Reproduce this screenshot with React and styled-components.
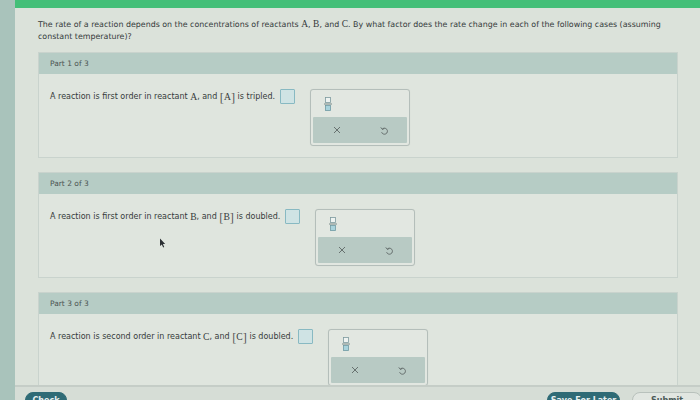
import styled, { createGlobalStyle } from 'styled-components';

const GlobalStyle = createGlobalStyle`
  html, body {
    margin: 0;
    padding: 0;
    background: #dbe2da;
  }
  * {
    box-sizing: border-box;
  }
`;

const parts = [
  { label: 'Part 1 of 3', order: 'first', reactant: 'A', change: 'tripled' },
  { label: 'Part 2 of 3', order: 'first', reactant: 'B', change: 'doubled', cursor: true },
  { label: 'Part 3 of 3', order: 'second', reactant: 'C', change: 'doubled' },
];

export default function App() {
  return (
    <>
      <GlobalStyle />
      <StyledShell>
        <StyledSidebar />
        <StyledMain>
          <StyledTopBar />
          <StyledContent>
            <StyledQuestion>
              The rate of a reaction depends on the concentrations of reactants <Var>A</Var>, <Var>B</Var>,
              and <Var>C</Var>. By what factor does the rate change in each of the following cases (assuming
              constant temperature)?
            </StyledQuestion>
            {parts.map((p) => (
              <StyledPanel key={p.label}>
                <StyledPanelHeader>{p.label}</StyledPanelHeader>
                <StyledPanelBody>
                  <StyledPrompt>
                    A reaction is {p.order} order in reactant <Var>{p.reactant}</Var>, and{' '}
                    <Bracket>[</Bracket>
                    <Var>{p.reactant}</Var>
                    <Bracket>]</Bracket> is {p.change}.
                    <StyledAnswerBox />
                  </StyledPrompt>
                  <StyledToolBox>
                    <StyledToolTop>
                      <FractionIcon />
                    </StyledToolTop>
                    <StyledToolBand>
                      <StyledToolButton aria-label='clear'>
                        <ClearIcon />
                      </StyledToolButton>
                      <StyledToolButton aria-label='undo'>
                        <UndoIcon />
                      </StyledToolButton>
                    </StyledToolBand>
                  </StyledToolBox>
                  {p.cursor && <Cursor />}
                </StyledPanelBody>
              </StyledPanel>
            ))}
          </StyledContent>
          <StyledFooter>
            <StyledFooterButton $left>Check</StyledFooterButton>
            <StyledFooterRight>
              <StyledFooterButton>Save For Later</StyledFooterButton>
              <StyledFooterButton $outline>Submit</StyledFooterButton>
            </StyledFooterRight>
          </StyledFooter>
        </StyledMain>
      </StyledShell>
    </>
  );
}

function FractionIcon() {
  return (
    <svg width='8' height='14' viewBox='0 0 8 14'>
      <rect x='1.5' y='0.5' width='5' height='5' fill='#eef3f1' stroke='#7d9a9e' strokeWidth='0.8' />
      <line x1='0' y1='7' x2='8' y2='7' stroke='#6d7f80' strokeWidth='0.9' />
      <rect x='1.5' y='8.5' width='5' height='5' fill='#a9d3dc' stroke='#6f9aa3' strokeWidth='0.8' />
    </svg>
  );
}

function ClearIcon() {
  return (
    <svg width='8' height='8' viewBox='0 0 8 8'>
      <path d='M1 1 L7 7 M7 1 L1 7' stroke='#5d6665' strokeWidth='0.9' fill='none' />
    </svg>
  );
}

function UndoIcon() {
  return (
    <svg width='8' height='9' viewBox='0 0 8 9'>
      <path d='M2.2 3.2 A3 3 0 1 1 1.6 6.2' stroke='#5d6665' strokeWidth='0.9' fill='none' />
      <path d='M0.8 1.4 L2.4 3.4 L4.4 2.4' stroke='#5d6665' strokeWidth='0.9' fill='none' />
    </svg>
  );
}

function Cursor() {
  return (
    <StyledCursor width='7' height='10' viewBox='0 0 7 10'>
      <path d='M1 0.5 L1 8 L2.8 6.4 L4.2 9.4 L5.2 9 L3.9 6 L6.2 6 Z' fill='#2b2f33' />
    </StyledCursor>
  );
}

const StyledShell = styled.div`
  display: flex;
  width: 700px;
  height: 400px;
  overflow: hidden;
  font-family: 'DejaVu Sans', Verdana, sans-serif;
  color: #3b3f3f;
`;

const StyledSidebar = styled.div`
  width: 15px;
  flex-shrink: 0;
  background: #a9c3bb;
`;

const StyledMain = styled.div`
  flex: 1;
  display: flex;
  flex-direction: column;
  min-width: 0;
`;

const StyledTopBar = styled.div`
  height: 8px;
  background: #44bf78;
  flex-shrink: 0;
`;

const StyledContent = styled.div`
  flex: 1;
  min-height: 0;
  overflow: hidden;
  padding: 11px 8px 0 23px;
  display: flex;
  flex-direction: column;
  gap: 14px;
`;

const StyledQuestion = styled.p`
  margin: 0 15px -5px 0;
  font-size: 7.9px;
  line-height: 12px;
  color: #353a3a;
`;

const Var = styled.span`
  font-family: 'Liberation Serif', 'Times New Roman', serif;
  font-size: 1.2em;
  line-height: 1;
`;

const Bracket = styled.span`
  font-family: 'Liberation Serif', 'Times New Roman', serif;
  font-size: 1.55em;
  line-height: 0;
  position: relative;
  top: 1px;
  color: #555;
`;

const StyledPanel = styled.section`
  width: 640px;
  flex-shrink: 0;
  border: 1px solid #c9d3cd;
  background: #dfe5de;
`;

const StyledPanelHeader = styled.div`
  height: 21px;
  display: flex;
  align-items: center;
  padding-left: 11px;
  background: #b6ccc5;
  font-size: 7.5px;
  color: #4d5553;
`;

const StyledPanelBody = styled.div`
  position: relative;
  display: flex;
  align-items: flex-start;
  gap: 15px;
  padding: 15px 11px 11px;
`;

const StyledPrompt = styled.div`
  display: flex;
  align-items: center;
  height: 15px;
  white-space: pre;
  font-size: 8px;
  color: #363b3b;
`;

const StyledAnswerBox = styled.span`
  display: inline-block;
  width: 15px;
  height: 15px;
  margin-left: 5px;
  border: 1px solid #88b9c2;
  border-radius: 1px;
  background: #cfe3e4;
`;

const StyledToolBox = styled.div`
  width: 100px;
  height: 57px;
  display: flex;
  flex-direction: column;
  border: 1px solid #b4beba;
  border-radius: 3px;
  background: #e2e7e1;
  padding: 0 2px 2px;
  box-shadow: 0 0 1px rgba(0, 0, 0, 0.08);
`;

const StyledToolTop = styled.div`
  flex: 1;
  display: flex;
  align-items: center;
  padding-left: 11px;
`;

const StyledToolBand = styled.div`
  height: 26px;
  display: grid;
  grid-template-columns: 1fr 1fr;
  background: #b8cac4;
  border-radius: 1px;
`;

const StyledToolButton = styled.button`
  border: none;
  background: transparent;
  padding: 0;
  display: flex;
  align-items: center;
  justify-content: center;
`;

const StyledCursor = styled.svg`
  position: absolute;
  left: 120px;
  top: 44px;
`;

const StyledFooter = styled.div`
  height: 15px;
  flex-shrink: 0;
  border-top: 2px solid #c5cdc7;
  background: #d6ddd6;
  display: flex;
  justify-content: space-between;
  align-items: flex-start;
  padding: 5px 0 0 10px;
  overflow: hidden;
`;

const StyledFooterRight = styled.div`
  display: flex;
  gap: 12px;
`;

const StyledFooterButton = styled.button`
  height: 20px;
  width: ${(p) => (p.$left ? '42px' : p.$outline ? '70px' : '73px')};
  border-radius: 8px;
  border: 1px solid ${(p) => (p.$outline ? '#b8c1bc' : '#2f6b76')};
  background: ${(p) => (p.$outline ? '#e1e6e1' : '#2f6b76')};
  color: ${(p) => (p.$outline ? '#4b5a58' : '#e8f0f0')};
  font-family: 'DejaVu Sans', Verdana, sans-serif;
  font-size: 8px;
  font-weight: bold;
  padding: 3px 0 0;
  margin-right: ${(p) => (p.$outline ? '-2px' : '0')};
  display: flex;
  justify-content: center;
  align-items: flex-start;
`;
